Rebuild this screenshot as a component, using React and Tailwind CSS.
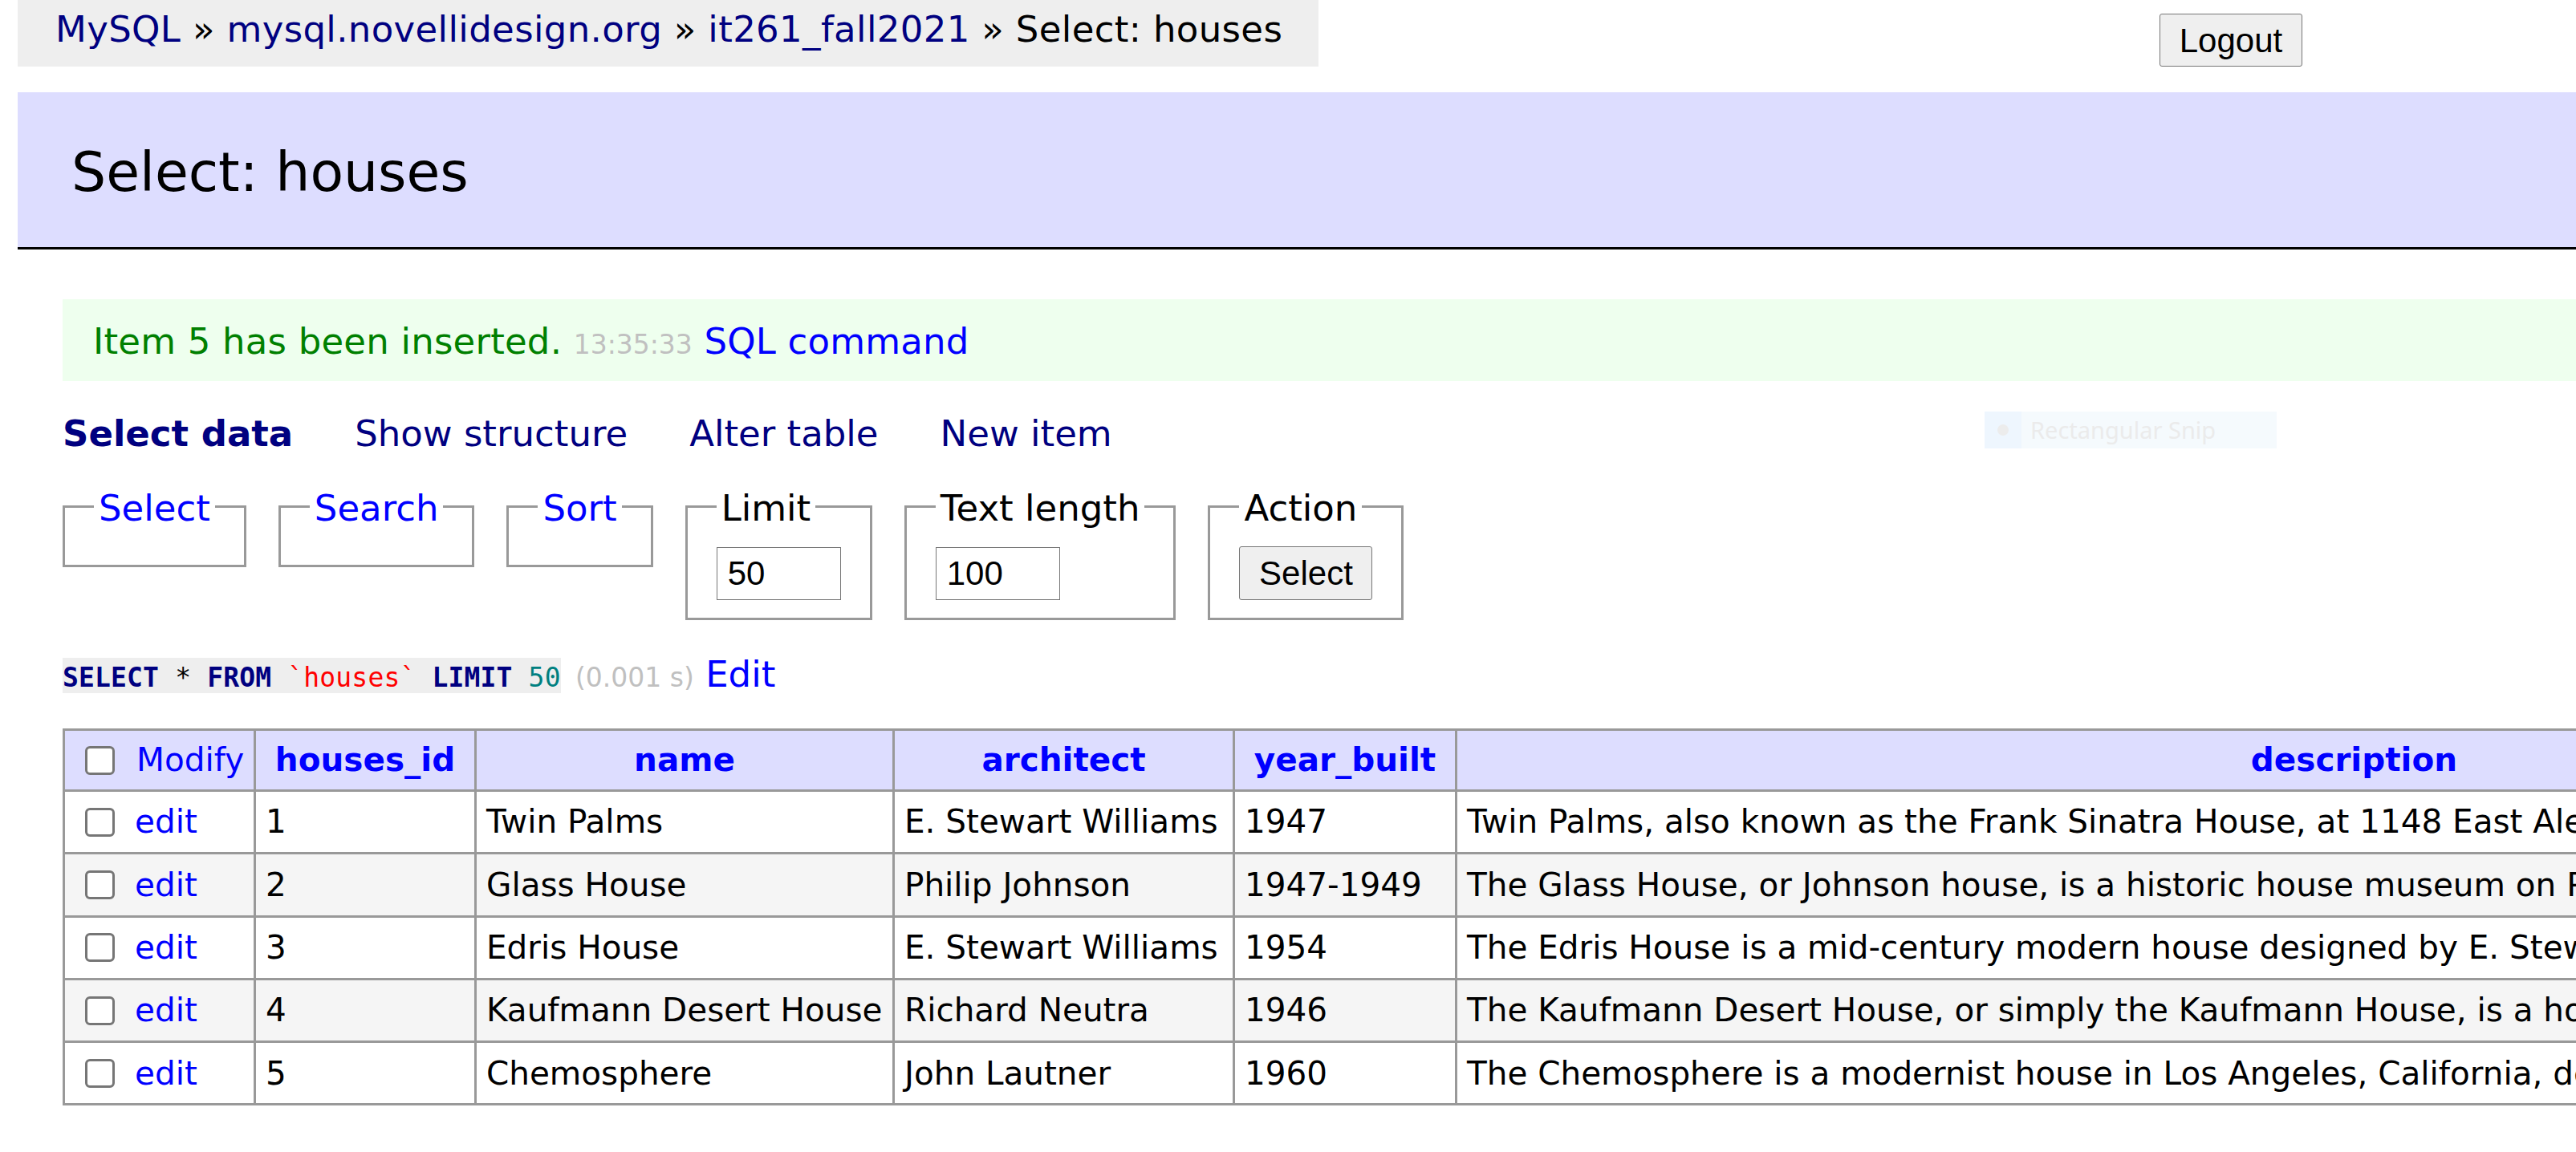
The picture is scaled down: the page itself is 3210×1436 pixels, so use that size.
const navy = "text-[#000080]";

function Checkbox({ className = "" }) {
  return (
    <span
      className={
        "inline-block h-[36px] w-[37px] shrink-0 rounded-[6px] border-[3px] border-[#767676] bg-white " +
        className
      }
    />
  );
}

const rows = [
  {
    id: 1,
    name: "Twin Palms",
    architect: "E. Stewart Williams",
    year: "1947",
    description:
      "Twin Palms, also known as the Frank Sinatra House, at 1148 East Alejo Road in Palm Springs, Californ…",
  },
  {
    id: 2,
    name: "Glass House",
    architect: "Philip Johnson",
    year: "1947-1949",
    description:
      "The Glass House, or Johnson house, is a historic house museum on Philip Johnson's estate in New Can…",
  },
  {
    id: 3,
    name: "Edris House",
    architect: "E. Stewart Williams",
    year: "1954",
    description:
      "The Edris House is a mid-century modern house designed by E. Stewart Williams in 1954. The house i…",
  },
  {
    id: 4,
    name: "Kaufmann Desert House",
    architect: "Richard Neutra",
    year: "1946",
    description:
      "The Kaufmann Desert House, or simply the Kaufmann House, is a house in Palm Springs, California, de…",
  },
  {
    id: 5,
    name: "Chemosphere",
    architect: "John Lautner",
    year: "1960",
    description:
      "The Chemosphere is a modernist house in Los Angeles, California, designed by architect John Lautner…",
  },
];

function Fieldset({ legend, legendClass = "text-black", children }) {
  return (
    <fieldset className="border-[3px] border-[#999] px-[36px] pb-[22px] pt-0">
      <legend className={"px-[6px] pt-[6px] text-[45px] leading-[56px] " + legendClass}>
        {legend}
      </legend>
      {children}
    </fieldset>
  );
}

export default function App() {
  const td = "border-[3px] border-[#999] px-[12px] whitespace-nowrap align-middle";
  const th = "border-[3px] border-[#999] px-[20px] whitespace-nowrap align-middle bg-[#ddf] text-center font-bold text-[#00f]";
  return (
    <div className="relative h-[1436px] w-[3210px] overflow-hidden bg-white font-['DejaVu_Sans',Verdana,sans-serif] text-black">
      {/* top bar */}
      <div className="flex h-[115px] items-start">
        <div className="ml-[22px] h-[83px] w-[1621px] whitespace-nowrap bg-[#eee] pl-[47px] text-[45px] leading-[73px] tracking-[0.35px]">
          <a className={navy}>MySQL</a> » <a className={navy}>mysql.novellidesign.org</a> »{" "}
          <a className={navy}>it261_fall2021</a> » Select: houses
        </div>
        <button className="ml-auto mr-[341px] mt-[17px] h-[66px] w-[178px] rounded-[3px] border border-[#767676] bg-[#efefef] font-['Liberation_Sans',Arial,sans-serif] text-[42px] text-black">
          Logout
        </button>
      </div>

      {/* heading */}
      <h2 className="ml-[22px] h-[196px] border-b-[3px] border-black bg-[#ddf] pl-[67px] pt-[57px] text-[68px] font-normal leading-[85px]">
        Select: houses
      </h2>

      <div className="pl-[78px]">
        {/* message */}
        <div className="mt-[62px] h-[102px] whitespace-nowrap bg-[#efe] pl-[38px] pt-[25px] text-[45px] leading-[56px] tracking-[0.2px] text-[#008000]">
          Item 5 has been inserted. <span className="text-[33px] tracking-normal text-[#c0c0c0]">13:35:33</span>{" "}
          <a className="text-[#00f]">SQL command</a>
        </div>

        {/* nav links */}
        <div className={"mt-[38px] flex gap-[77px] whitespace-nowrap text-[45px] leading-[56px] " + navy}>
          <a className="font-bold">Select data</a>
          <a>Show structure</a>
          <a>Alter table</a>
          <a>New item</a>
        </div>

        {/* fieldsets */}
        <div className="mt-[31px] flex items-start gap-[40px]">
          <Fieldset legend="Select" legendClass="text-[#00f]">
            <div className="h-[20px]" />
          </Fieldset>
          <Fieldset legend="Search" legendClass="text-[#00f]">
            <div className="h-[20px]" />
          </Fieldset>
          <Fieldset legend="Sort" legendClass="text-[#00f]">
            <div className="h-[20px]" />
          </Fieldset>
          <Fieldset legend="Limit">
            <div className="pt-[20px]">
              <input
                readOnly
                value="50"
                className="block h-[66px] w-[155px] border border-[#767676] bg-white pl-[13px] font-['Liberation_Sans',Arial,sans-serif] text-[42px] text-black outline-none"
              />
            </div>
          </Fieldset>
          <Fieldset legend="Text length">
            <div className="pt-[20px]">
              <input
                readOnly
                value="100"
                className="block h-[66px] w-[155px] border border-[#767676] bg-white pl-[13px] font-['Liberation_Sans',Arial,sans-serif] text-[42px] text-black outline-none"
              />
            </div>
          </Fieldset>
          <Fieldset legend="Action">
            <div className="pt-[19px]">
              <button className="block h-[67px] w-[166px] rounded-[3px] border border-[#767676] bg-[#efefef] font-['Liberation_Sans',Arial,sans-serif] text-[42px] text-black">
                Select
              </button>
            </div>
          </Fieldset>
        </div>

        {/* SQL line */}
        <div className="mt-[40px] whitespace-nowrap text-[45px] leading-[56px]">
          <code className="bg-[#eee] pt-[5px] font-['DejaVu_Sans_Mono',monospace] text-[33px] tracking-[0.15px]">
            <span className="font-bold text-[#000080]">SELECT</span> *{" "}
            <span className="font-bold text-[#000080]">FROM</span>{" "}
            <span className="text-[#f00]">`houses`</span>{" "}
            <span className="font-bold text-[#000080]">LIMIT</span>{" "}
            <span className="text-[#008080]">50</span>
          </code>{" "}
          <span className="ml-[4px] text-[33px] text-[#c0c0c0]">(0.001 s)</span>{" "}
          <a className="text-[#00f]">Edit</a>
        </div>

        {/* table */}
        <table className="mt-[35px] w-[3973px] table-fixed border-collapse text-[40.5px] leading-[1.25]">
          <colgroup>
            <col className="w-[238px]" />
            <col className="w-[275px]" />
            <col className="w-[521px]" />
            <col className="w-[424px]" />
            <col className="w-[277px]" />
            <col className="w-[2238px]" />
          </colgroup>
          <thead>
            <tr className="h-[76px]">
              <td className={td + " bg-[#ddf]"}>
                <div className="flex items-center">
                  <Checkbox className="ml-[13px]" />
                  <a className="ml-[27px] text-[#00f]">Modify</a>
                </div>
              </td>
              <th className={th}>houses_id</th>
              <th className={th}>name</th>
              <th className={th}>architect</th>
              <th className={th}>year_built</th>
              <th className={th}>description</th>
            </tr>
          </thead>
          <tbody>
            {rows.map((r, i) => {
              const bg = i % 2 === 1 ? " bg-[#f5f5f5]" : " bg-white";
              return (
                <tr key={r.id} className="h-[78.3px]">
                  <td className={td + bg}>
                    <div className="flex items-center">
                      <Checkbox className="ml-[13px]" />
                      <a className="ml-[25px] text-[#00f]">edit</a>
                    </div>
                  </td>
                  <td className={td + bg}>{r.id}</td>
                  <td className={td + bg}>{r.name}</td>
                  <td className={td + bg}>{r.architect}</td>
                  <td className={td + bg}>{r.year}</td>
                  <td className={td + bg}>{r.description}</td>
                </tr>
              );
            })}
          </tbody>
        </table>
      </div>

      {/* faint snipping-tool overlay */}
      <div className="absolute left-[2473px] top-[513px] flex h-[46px] w-[364px] items-center bg-[#f5fafd]">
        <div className="flex h-full w-[46px] items-center justify-center bg-[#eef6fe]">
          <span className="h-[14px] w-[14px] rounded-full bg-[#ececec]" />
        </div>
        <span className="ml-[11px] font-['Noto_Sans',sans-serif] text-[29px] text-[#ebebeb]">Rectangular Snip</span>
      </div>
    </div>
  );
}
